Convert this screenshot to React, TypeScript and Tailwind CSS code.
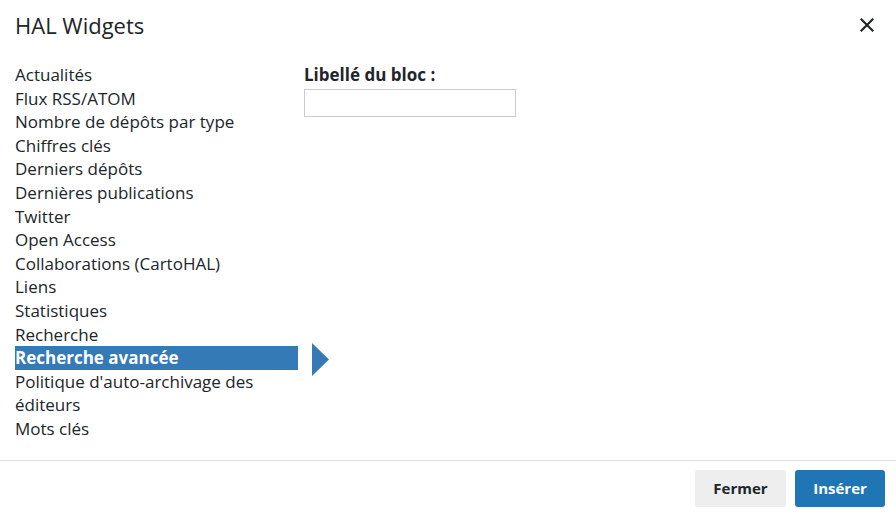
import React from "react";

const items = [
  "Actualités",
  "Flux RSS/ATOM",
  "Nombre de dépôts par type",
  "Chiffres clés",
  "Derniers dépôts",
  "Dernières publications",
  "Twitter",
  "Open Access",
  "Collaborations (CartoHAL)",
  "Liens",
  "Statistiques",
  "Recherche",
  "Recherche avancée",
  "Politique d'auto-archivage des éditeurs",
  "Mots clés",
];

export default function App() {
  return (
    <div
      className="w-[896px] h-[515px] bg-white text-[#212529] flex flex-col overflow-hidden"
      style={{ fontFamily: '"Open Sans", "Noto Sans", sans-serif' }}
    >
      <div className="h-[50px] flex items-center justify-between pl-[15px] pr-[22px] shrink-0">
        <h1 className="text-[22px] leading-none font-normal">HAL Widgets</h1>
        <svg width="14" height="14" viewBox="0 0 14 14" className="text-[#212529]">
          <path d="M1.5 1.5 L12.5 12.5 M12.5 1.5 L1.5 12.5" stroke="currentColor" strokeWidth="2.2" strokeLinecap="square" />
        </svg>
      </div>
      <div className="flex-1 flex pl-[15px] pt-[13px]">
        <ul className="w-[289px] shrink-0 text-[17px] leading-[23.6px]">
          {items.map((it) => {
            const sel = it === "Recherche avancée";
            return (
              <li key={it} className={sel ? "relative w-[283px] bg-[#337ab7] text-white font-bold" : "w-[283px]"}>
                {it}
                {sel && (
                  <svg
                    width="17"
                    height="33"
                    viewBox="0 0 17 33"
                    className="absolute left-[297px] top-[-3px]"
                  >
                    <polygon points="0,0 17,16.5 0,33" fill="#337ab7" />
                  </svg>
                )}
              </li>
            );
          })}
        </ul>
        <div className="flex flex-col">
          <label className="text-[17px] leading-[23.6px] font-bold">Libellé du bloc :</label>
          <input className="mt-[2px] w-[212px] h-[28px] border border-[#cccccc] outline-none" />
        </div>
      </div>
      <div className="h-[55px] border-t border-[#dddddd] flex items-center justify-end gap-[9px] pr-[11px] shrink-0">
        <button className="w-[91px] h-[37px] rounded-[3px] bg-[#eeeeee] text-[15px] font-bold text-[#212529]">
          Fermer
        </button>
        <button className="w-[90px] h-[37px] rounded-[3px] bg-[#2076b5] text-[15px] font-bold text-white">
          Insérer
        </button>
      </div>
    </div>
  );
}
